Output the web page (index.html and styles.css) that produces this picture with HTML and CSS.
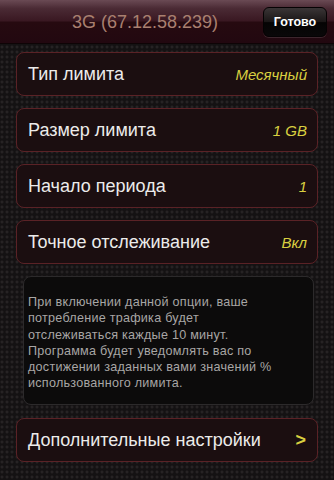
FILE: index.html
```html
<!DOCTYPE html>
<html lang="ru">
<head>
<meta charset="utf-8">
<link rel="stylesheet" href="styles.css">
</head>
<body>
<header class="bar">
  <div class="title">3G (67.12.58.239)</div>
  <button class="done">Готово</button>
</header>
<main class="list">
  <div class="row"><span class="label">Тип лимита</span><span class="value">Месячный</span></div>
  <div class="row"><span class="label">Размер лимита</span><span class="value">1 GB</span></div>
  <div class="row"><span class="label">Начало периода</span><span class="value">1</span></div>
  <div class="row"><span class="label">Точное отслеживание</span><span class="value">Вкл</span></div>
  <div class="info">При включении данной опции, ваше<br>потребление трафика будет<br>отслеживаться каждые 10 минут.<br>Программа будет уведомлять вас по<br>достижении заданных вами значений %<br>использованного лимита.</div>
  <div class="row more"><span class="label">Дополнительные настройки</span><span class="value arrow">&gt;</span></div>
</main>
</body>
</html>
```
FILE: styles.css
```css
* { box-sizing: border-box; }
html, body { margin: 0; padding: 0; }
body {
  width: 334px;
  height: 480px;
  overflow: hidden;
  font-family: "Liberation Sans", Arial, sans-serif;
  background-color: #141213;
  background-image:
    radial-gradient(circle at 2px 2px, #262324 1.2px, transparent 1.8px);
  background-size: 5px 5px;
}
.bar {
  height: 44px;
  position: relative;
  display: flex;
  align-items: center;
  justify-content: center;
  background: linear-gradient(#6a4a54 0%, #4a2a34 20%, #3a1822 48%, #260a10 52%, #220810 100%);
  border-bottom: 1px solid #0e0406;
}
.title {
  color: #a98070;
  font-size: 18px;
  margin-right: 44px;
  margin-top: 1px;
}
.done {
  position: absolute;
  right: 7px;
  top: 7px;
  width: 64px;
  height: 30px;
  border-radius: 6px;
  border: 1px solid #050203;
  background: linear-gradient(#3a3536 0%, #1a1616 50%, #050404 52%, #0a0809 100%);
  box-shadow: 0 1px 0 rgba(255,255,255,0.12);
  color: #fff;
  font-family: "Liberation Sans", Arial, sans-serif;
  font-weight: bold;
  font-size: 12.5px;
  padding: 0;
}
.list {
  display: flex;
  flex-direction: column;
  padding: 8px 16px 0 16px;
  gap: 12px;
}
.row {
  height: 44px;
  flex: none;
  display: flex;
  align-items: center;
  justify-content: space-between;
  padding: 0 10px 0 11px;
  border: 1px solid #5a2226;
  border-radius: 8px;
  background: #1b0e10;
}
.label {
  color: #ecebea;
  font-size: 18px;
  margin-top: 1px;
}
.value {
  color: #d9d040;
  font-size: 15px;
  font-style: italic;
}
.arrow {
  font-style: normal;
  font-size: 18px;
  font-weight: bold;
  margin-right: 1px;
}
.info {
  flex: none;
  margin: 0 4px 1px 7px;
  height: 129px;
  border: 1px solid #2c2a2b;
  border-radius: 8px;
  background: #0c0b0b;
  color: #a8a6a5;
  font-size: 12.6px;
  letter-spacing: 0.25px;
  line-height: 16.3px;
  white-space: nowrap;
  padding: 17px 8px 0 4px;
}
.more {
  margin-top: 0;
}
```
